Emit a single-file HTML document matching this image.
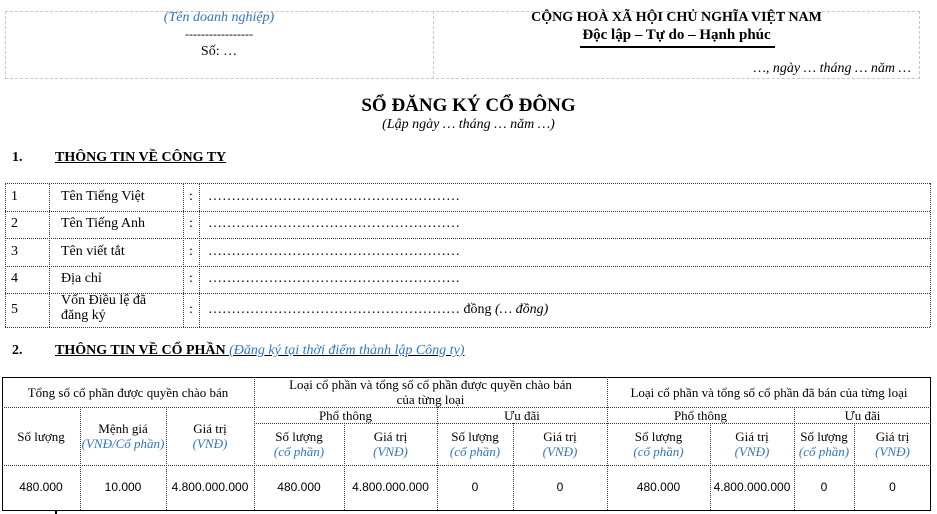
<!DOCTYPE html>
<html><head><meta charset="utf-8"><style>
*{margin:0;padding:0;box-sizing:border-box}
body{width:937px;height:514px;background:#fff;position:relative;overflow:hidden;font-family:"Liberation Serif",serif;font-size:14px;color:#000}
.a{position:absolute}
.h{position:absolute;height:0;border-top:1px dotted #333}
.v{position:absolute;width:0;border-left:1px dotted #333}
.c{position:absolute;display:flex;align-items:center;justify-content:center;text-align:center;line-height:15px;font-size:13px}
.c>div{width:100%;white-space:nowrap}
.blue{color:#2e75c6;font-style:italic}
.n{font-family:"Liberation Sans",sans-serif;font-size:12px}
</style></head><body>
<!-- header box -->
<div class="a" style="left:5px;top:11px;width:915px;height:68px;border:1px dashed #c8c8c8"></div>
<div class="a" style="left:433px;top:11px;height:68px;border-left:1px dashed #c8c8c8"></div>
<div class="a blue" style="left:5px;top:10px;width:428px;text-align:center;font-size:14px">(Tên doanh nghiệp)</div>
<div class="a" style="left:5px;top:29px;width:428px;text-align:center;font-size:12px;line-height:10px">-----------------</div>
<div class="a" style="left:5px;top:44px;width:428px;text-align:center">Số: …</div>
<div class="a" style="left:433px;top:10px;width:487px;text-align:center;font-weight:bold;font-size:14px">CỘNG HOÀ XÃ HỘI CHỦ NGHĨA VIỆT NAM</div>
<div class="a" style="left:433px;top:27px;width:487px;text-align:center;font-weight:bold;font-size:15px">Độc lập – Tự do – Hạnh phúc</div>
<div class="a" style="left:580px;top:46px;width:195px;border-top:2px solid #000"></div>
<div class="a" style="left:433px;top:61px;width:478px;text-align:right;font-style:italic">…, ngày … tháng … năm …</div>
<!-- title -->
<div class="a" style="left:0;top:95px;width:937px;text-align:center;font-weight:bold;font-size:19px">SỔ ĐĂNG KÝ CỔ ĐÔNG</div>
<div class="a" style="left:0;top:117px;width:937px;text-align:center;font-style:italic">(Lập ngày … tháng … năm …)</div>
<div class="a" style="left:12px;top:150px;font-weight:bold">1.</div>
<div class="a" style="left:55px;top:150px;font-weight:bold;text-decoration:underline">THÔNG TIN VỀ CÔNG TY</div>
<!-- info table -->
<div class="h" style="left:5px;top:183px;width:925px"></div>
<div class="h" style="left:5px;top:211px;width:925px"></div>
<div class="h" style="left:5px;top:238px;width:925px"></div>
<div class="h" style="left:5px;top:266px;width:925px"></div>
<div class="h" style="left:5px;top:293px;width:925px"></div>
<div class="h" style="left:5px;top:327px;width:925px"></div>
<div class="v" style="left:5px;top:183px;height:144px"></div>
<div class="v" style="left:49px;top:183px;height:144px"></div>
<div class="v" style="left:183px;top:183px;height:144px"></div>
<div class="v" style="left:199px;top:183px;height:144px"></div>
<div class="v" style="left:930px;top:183px;height:144px"></div>
<div class="a" style="left:11px;top:189px">1</div><div class="a" style="left:61px;top:189px">Tên Tiếng Việt</div><div class="a" style="left:189px;top:189px">:</div><div class="a" style="left:208px;top:189px">………………………………………………</div>
<div class="a" style="left:11px;top:216px">2</div><div class="a" style="left:61px;top:216px">Tên Tiếng Anh</div><div class="a" style="left:189px;top:216px">:</div><div class="a" style="left:208px;top:216px">………………………………………………</div>
<div class="a" style="left:11px;top:244px">3</div><div class="a" style="left:61px;top:244px">Tên viết tắt</div><div class="a" style="left:189px;top:244px">:</div><div class="a" style="left:208px;top:244px">………………………………………………</div>
<div class="a" style="left:11px;top:271px">4</div><div class="a" style="left:61px;top:271px">Địa chỉ</div><div class="a" style="left:189px;top:271px">:</div><div class="a" style="left:208px;top:271px">………………………………………………</div>
<div class="a" style="left:11px;top:302px">5</div><div class="a" style="left:61px;top:293px;line-height:15px">Vốn Điều lệ đã<br>đăng ký</div><div class="a" style="left:189px;top:302px">:</div><div class="a" style="left:208px;top:302px">……………………………………………… đồng <i>(… đồng)</i></div>
<div class="a" style="left:12px;top:343px;font-weight:bold">2.</div>
<div class="a" style="left:55px;top:343px;text-decoration:underline"><b>THÔNG TIN VỀ CỔ PHẦN</b> <span class="blue">(Đăng ký tại thời điểm thành lập Công ty)</span></div>
<!-- shares table -->
<div class="a" style="left:2px;top:377px;width:929px;height:134px;border:1px solid #000"></div>
<div class="h" style="left:2px;top:407px;width:929px"></div>
<div class="h" style="left:254px;top:423px;width:677px"></div>
<div class="h" style="left:2px;top:465px;width:929px"></div>
<div class="v" style="left:80px;top:407px;height:103px"></div>
<div class="v" style="left:166px;top:407px;height:103px"></div>
<div class="v" style="left:254px;top:377px;height:133px"></div>
<div class="v" style="left:344px;top:423px;height:87px"></div>
<div class="v" style="left:437px;top:407px;height:103px"></div>
<div class="v" style="left:513px;top:423px;height:87px"></div>
<div class="v" style="left:607px;top:377px;height:133px"></div>
<div class="v" style="left:710px;top:423px;height:87px"></div>
<div class="v" style="left:794px;top:407px;height:103px"></div>
<div class="v" style="left:854px;top:423px;height:87px"></div>
<div class="c" style="left:2px;top:377px;width:252px;height:30px"><div>Tổng số cổ phần được quyền chào bán</div></div>
<div class="c" style="left:254px;top:377px;width:353px;height:30px"><div>Loại cổ phần và tổng số cổ phần được quyền chào bán<br>của từng loại</div></div>
<div class="c" style="left:607px;top:377px;width:324px;height:30px"><div>Loại cổ phần và tổng số cổ phần đã bán của từng loại</div></div>
<div class="c" style="left:2px;top:407px;width:78px;height:58px"><div>Số lượng</div></div>
<div class="c" style="left:80px;top:407px;width:86px;height:58px"><div>Mệnh giá<br><span class="blue">(VNĐ/Cổ phần)</span></div></div>
<div class="c" style="left:166px;top:407px;width:88px;height:58px"><div>Giá trị<br><span class="blue">(VNĐ)</span></div></div>
<div class="c" style="left:254px;top:407px;width:183px;height:16px"><div>Phổ thông</div></div>
<div class="c" style="left:437px;top:407px;width:170px;height:16px"><div>Ưu đãi</div></div>
<div class="c" style="left:607px;top:407px;width:187px;height:16px"><div>Phổ thông</div></div>
<div class="c" style="left:794px;top:407px;width:137px;height:16px"><div>Ưu đãi</div></div>
<div class="c" style="left:254px;top:423px;width:90px;height:42px"><div>Số lượng<br><span class="blue">(cổ phần)</span></div></div>
<div class="c" style="left:344px;top:423px;width:93px;height:42px"><div>Giá trị<br><span class="blue">(VNĐ)</span></div></div>
<div class="c" style="left:437px;top:423px;width:76px;height:42px"><div>Số lượng<br><span class="blue">(cổ phần)</span></div></div>
<div class="c" style="left:513px;top:423px;width:94px;height:42px"><div>Giá trị<br><span class="blue">(VNĐ)</span></div></div>
<div class="c" style="left:607px;top:423px;width:103px;height:42px"><div>Số lượng<br><span class="blue">(cổ phần)</span></div></div>
<div class="c" style="left:710px;top:423px;width:84px;height:42px"><div>Giá trị<br><span class="blue">(VNĐ)</span></div></div>
<div class="c" style="left:794px;top:423px;width:60px;height:42px"><div>Số lượng<br><span class="blue">(cổ phần)</span></div></div>
<div class="c" style="left:854px;top:423px;width:77px;height:42px"><div>Giá trị<br><span class="blue">(VNĐ)</span></div></div>
<div class="c n" style="left:2px;top:465px;width:78px;height:45px"><div>480.000</div></div>
<div class="c n" style="left:80px;top:465px;width:86px;height:45px"><div>10.000</div></div>
<div class="c n" style="left:166px;top:465px;width:88px;height:45px"><div>4.800.000.000</div></div>
<div class="c n" style="left:254px;top:465px;width:90px;height:45px"><div>480.000</div></div>
<div class="c n" style="left:344px;top:465px;width:93px;height:45px"><div>4.800.000.000</div></div>
<div class="c n" style="left:437px;top:465px;width:76px;height:45px"><div>0</div></div>
<div class="c n" style="left:513px;top:465px;width:94px;height:45px"><div>0</div></div>
<div class="c n" style="left:607px;top:465px;width:103px;height:45px"><div>480.000</div></div>
<div class="c n" style="left:710px;top:465px;width:84px;height:45px"><div>4.800.000.000</div></div>
<div class="c n" style="left:794px;top:465px;width:60px;height:45px"><div>0</div></div>
<div class="c n" style="left:854px;top:465px;width:77px;height:45px"><div>0</div></div>
<div class="a" style="left:55px;top:510px;width:2px;height:4px;background:#000"></div>
</body></html>
